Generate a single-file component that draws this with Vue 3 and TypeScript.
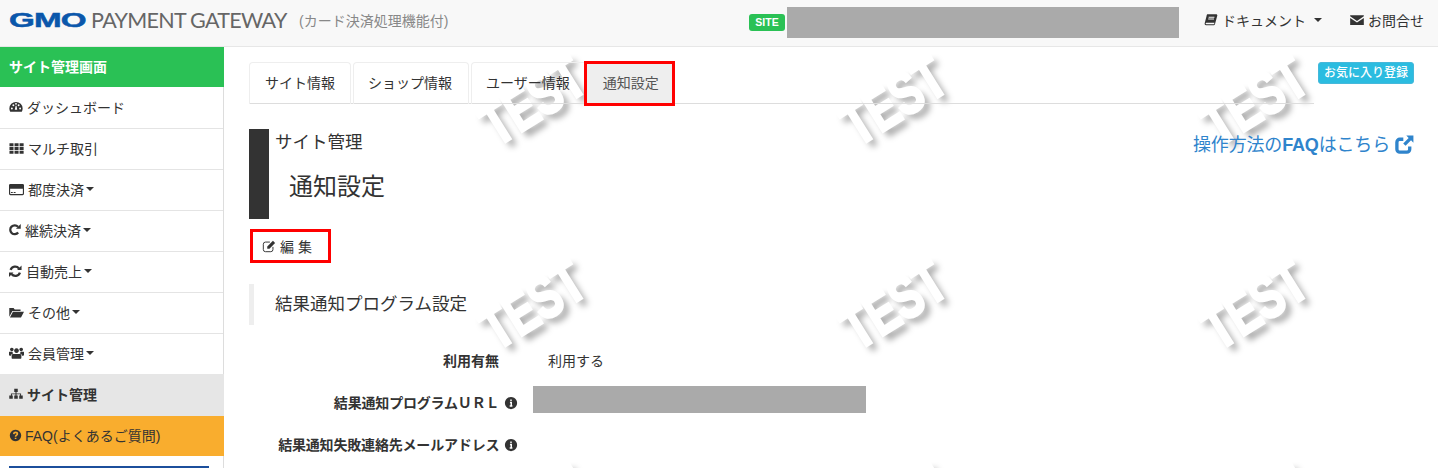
<script setup lang="ts">
interface Icon { fill?: string; stroke?: string; white?: string; vb?: string }
const icons: Record<string, Icon> = {
  dashboard: { fill: 'M8 2.2A7.6 7.6 0 0 0 .4 9.8c0 1.4.4 2.6 1 3.6h13.2c.6-1 1-2.2 1-3.6A7.6 7.6 0 0 0 8 2.2zM2.2 9.8a1.1 1.1 0 1 0 2.2 0a1.1 1.1 0 1 0-2.2 0zM3.9 6a1.1 1.1 0 1 0 2.2 0a1.1 1.1 0 1 0-2.2 0zM6.9 4.4a1.1 1.1 0 1 0 2.2 0a1.1 1.1 0 1 0-2.2 0zM9.9 6a1.1 1.1 0 1 0 2.2 0a1.1 1.1 0 1 0-2.2 0zM11.6 9.8a1.1 1.1 0 1 0 2.2 0a1.1 1.1 0 1 0-2.2 0zM6.6 11.2h2.8L8.6 6.6h-1z' },
  th: { fill: 'M.5 2.5h4.3v3H.5zM5.9 2.5h4.3v3H5.9zM11.3 2.5h4.3v3h-4.3zM.5 6.5h4.3v3H.5zM5.9 6.5h4.3v3H5.9zM11.3 6.5h4.3v3h-4.3zM.5 10.5h4.3v3H.5zM5.9 10.5h4.3v3H5.9zM11.3 10.5h4.3v3h-4.3z' },
  card: { fill: 'M1.5 2h13A1.5 1.5 0 0 1 16 3.5v9a1.5 1.5 0 0 1-1.5 1.5h-13A1.5 1.5 0 0 1 0 12.5v-9A1.5 1.5 0 0 1 1.5 2zM1.2 7.2v5.1c0 .3.2.5.5.5h12.6c.3 0 .5-.2.5-.5V7.2zM2 10.6h2v1H2zM5 10.6h2v1H5z' },
  repeat: { vb: '1.5 1.4 14 14', stroke: 'M12.2 11.4A5.2 5.2 0 1 1 12 4.6', fill: 'M9.6 7h5.6V1.4z' },
  refresh: { vb: '1 1 14.5 14.5', stroke: 'M2.8 6.4A5.4 5.4 0 0 1 12.2 5M13.2 9.6A5.4 5.4 0 0 1 3.8 11', fill: 'M10 6.6h5V1.6zM6 9.4H1v5z' },
  folder: { fill: 'M.3 12.5V3.2h4.6l1.2 1.5h6.2v1.6H3.6zM4.2 7.3H16L12.8 13.4H1z' },
  users: { fill: 'M8 2.4a2.5 2.5 0 1 0 .01 0zM3 1.8a1.9 1.9 0 1 0 .01 0zM13 1.8a1.9 1.9 0 1 0 .01 0zM4.5 8.4h7c1 0 1.7.7 1.7 1.8v2.2c0 .8-.6 1.3-1.3 1.3H4.100c-.7 0-1.300-.5-1.300-1.300v-2.200c0-1.100.7-1.800 1.700-1.800zM.3 6.200h3.300c.2.800.6 1.300 1 1.700-1.500.3-2.400 1.200-2.600 2.500H1c-.6 0-1-.4-1-1V7c0-.4.100-.8.300-.8zM15.700 6.200h-3.300c-.2.800-.6 1.300-1 1.700 1.500.3 2.400 1.200 2.600 2.500h1c.6 0 1-.4 1-1V7c0-.4-.1-.8-.3-.8z' },
  sitemap: { fill: 'M6 2h4v3.800H8.600v1.500h5.200v2.400H15.700V13.500h-4V9.700h1V8.400H8.600v1.300H10V13.500H6V9.700h1.400V8.400H3.300v1.300h1V13.500h-4V9.700h1.900V7.300h5.200V5.800H6z' },
  question: { fill: 'M8 1a7 7 0 1 0 .01 0z', white: 'M5.800 6.300C5.900 4.900 6.900 4.200 8.100 4.200c1.300 0 2.200.8 2.200 1.900 0 1.500-2.200 1.600-2.200 3.300M8.100 10.700v1.500' },
  info: { fill: 'M8 1a7 7 0 1 0 .01 0z', white: 'M6.800 7.400h1.500v4M6.500 11.400h3.100M8 4.100v1.500' },
  book: { fill: 'M4 1.500h10.500l.8 1-2.700 10c-.2.900-1 1.500-1.900 1.500H2.300C1.200 14 .4 13 .8 11.800L3 3c.1-.8.500-1.500 1-1.500zM5.300 4.300v1h6.600v-1zM4.800 6.400v1h6.600v-1zM2.700 11.200c-.6 0-.9.400-.8.900 0 .5.400.7.900.7h8.300c.3 0 .5-.2.600-.5l.2-1.100z' },
  mail: { fill: 'M.2 2.500h15.600v1.300L8 9 .2 3.800zM.2 5.600 8 10.800l7.800-5.200v8H.2z' },
  external: { stroke: 'M7 3.600H4A2.400 2.400 0 0 0 1.600 6v6A2.400 2.400 0 0 0 4 14.400h6a2.400 2.400 0 0 0 2.400-2.400V9.600', fill: 'M9.500.5h6v6l-2-2-4.600 4.600-2-2L11.500 2.500z' },
}
const menu = [
  { icon: 'dashboard', label: 'ダッシュボード', w: 14 },
  { icon: 'th', label: 'マルチ取引', w: 15 },
  { icon: 'card', label: '都度決済', caret: true, w: 15 },
  { icon: 'repeat', label: '継続決済', caret: true, w: 12 },
  { icon: 'refresh', label: '自動売上', caret: true, w: 13 },
  { icon: 'folder', label: 'その他', caret: true, w: 15 },
  { icon: 'users', label: '会員管理', caret: true, w: 15 },
]
const tabs = ['サイト情報', 'ショップ情報', 'ユーザー情報']
const marks = [
  [309, 101], [670, 101], [1031, 101],
  [309, 305], [670, 305], [1031, 305],
  [309, 509], [670, 509], [1031, 509],
].map(([x, y]) => ({ left: `${x}px`, top: `${y - 47}px` }))
</script>

<template>
  <div class="page">
    <header class="topbar">
      <div class="logo">
        <span class="gmo">GMO</span>
        <span class="pg">PAYMENT GATEWAY</span>
      </div>
      <span class="sub">(カード決済処理機能付)</span>
      <span class="site">SITE</span>
      <span class="redact head-redact"></span>
      <a class="nav-link doc">
        <svg class="ic" viewBox="0 0 16 16"><path :d="icons.book.fill" fill="#333" fill-rule="evenodd" /></svg>
        ドキュメント<i class="caret caret-doc"></i>
      </a>
      <a class="nav-link contact">
        <svg class="ic" viewBox="0 0 16 16"><path :d="icons.mail.fill" fill="#333" /></svg>
        お問合せ
      </a>
    </header>
    <div class="body">
      <aside class="side">
        <div class="side-title">サイト管理画面</div>
        <a v-for="m in menu" :key="m.label" class="side-item">
          <svg class="ic" :style="{ width: m.w + 'px', height: m.w + 'px' }" :viewBox="icons[m.icon].vb || '0 0 16 16'">
            <path v-if="icons[m.icon].stroke" :d="icons[m.icon].stroke" fill="none" stroke="#333" stroke-width="2.6" />
            <path :d="icons[m.icon].fill" fill="#333" fill-rule="evenodd" />
          </svg>
          <span>{{ m.label }}</span><i v-if="m.caret" class="caret"></i>
        </a>
        <a class="side-item current">
          <svg class="ic" viewBox="0 0 16 16"><path :d="icons.sitemap.fill" fill="#333" /></svg>
          <span>サイト管理</span>
        </a>
        <a class="side-item faq">
          <svg class="ic small" viewBox="0 0 16 16">
            <path :d="icons.question.fill" fill="#333" />
            <path :d="icons.question.white" fill="none" stroke="#f9ad2e" stroke-width="2" />
          </svg>
          <span>FAQ(よくあるご質問)</span>
        </a>
        <div class="banner-edge"></div>
      </aside>
      <main class="main">
        <div class="marks">
          <span v-for="(p, i) in marks" :key="i" class="mark" :style="p">TEST</span>
        </div>
        <div class="content">
          <div class="tabs-row">
            <nav class="tabs">
              <a v-for="t in tabs" :key="t" class="tab">{{ t }}</a>
              <a class="tab active">通知設定</a>
            </nav>
            <a class="fav">お気に入り登録</a>
          </div>
          <div class="title-row">
            <div class="title">
              <div class="crumb">サイト管理</div>
              <h1>通知設定</h1>
            </div>
            <a class="howto"><span>操作方法の<b>FAQ</b>はこちら</span>
              <svg class="ext" viewBox="0 0 16 16">
                <path :d="icons.external.stroke" fill="none" stroke="#2f84cc" stroke-width="2.800" />
                <path :d="icons.external.fill" fill="#2f84cc" />
              </svg>
            </a>
          </div>
          <a class="edit">
            <svg class="edit-ic" viewBox="0 0 16 16">
              <path d="M12.500 9v3A2.500 2.500 0 0 1 10 14.500H4A2.500 2.500 0 0 1 1.500 12V6A2.500 2.500 0 0 1 4 3.500h5" fill="none" stroke="#333" stroke-width="1.100" />
              <path d="M6 8.500 12.500 2l2.500 2.500L8.500 11H6z" fill="#333" />
            </svg>
            <span>編 集</span>
          </a>
          <h2 class="section">結果通知プログラム設定</h2>
          <dl class="form">
            <div class="row">
              <dt>利用有無</dt>
              <dd class="value">利用する</dd>
            </div>
            <div class="row">
              <dt class="with-info">結果通知プログラムＵＲＬ
                <svg class="info" viewBox="0 0 16 16">
                  <path :d="icons.info.fill" fill="#333" />
                  <path :d="icons.info.white" fill="none" stroke="#fff" stroke-width="1.700" />
                </svg>
              </dt>
              <dd class="redact url-redact"></dd>
            </div>
            <div class="row">
              <dt class="with-info">結果通知失敗連絡先メールアドレス
                <svg class="info" viewBox="0 0 16 16">
                  <path :d="icons.info.fill" fill="#333" />
                  <path :d="icons.info.white" fill="none" stroke="#fff" stroke-width="1.700" />
                </svg>
              </dt>
              <dd></dd>
            </div>
          </dl>
        </div>
      </main>
    </div>
  </div>
</template>

<style>
html, body { margin: 0; background: #fff; }
</style>

<style scoped>
.page {
  width: 1438px;
  height: 468px;
  overflow: hidden;
  font-family: "Liberation Sans", "Noto Sans CJK JP", sans-serif;
  font-size: 14px;
  color: #333;
}
.topbar {
  height: 46px;
  border-bottom: 1px solid #e7e7e7;
  background: #f8f8f8;
  display: flex;
  align-items: center;
  padding-left: 9px;
}
.logo { display: flex; flex: none; align-items: center; width: 278px; margin-top: -6px; }
.gmo {
  flex: none;
  display: inline-block;
  width: 82px;
  font-size: 21px;
  font-weight: 700;
  color: #0b57ab;
  -webkit-text-stroke: .5px #0b57ab;
  transform: scaleX(1.58);
  transform-origin: left center;
  letter-spacing: -.5px;
}
.pg {
  flex: none;
  font-family: "Lato", sans-serif;
  font-size: 21.500px;
  color: #666;
  white-space: nowrap;
  letter-spacing: -.7px;
}
.sub { flex: none; margin-left: 12px; margin-top: -6px; color: #888; width: 450px; }
.site {
  flex: none;
  width: 36px;
  height: 17px;
  line-height: 17px;
  margin-top: -1px;
  border-radius: 3px;
  background: #2ac155;
  color: #fff;
  font-size: 10.500px;
  font-weight: 700;
  text-align: center;
}
.redact { background: #aaa; display: block; }
.head-redact { flex: none; width: 392px; height: 31px; margin-left: 2px; margin-top: -1px; }
.nav-link { display: flex; align-items: center; color: #333; white-space: nowrap; margin-top: -6px; }
.doc { margin-left: 25px; }
.contact { margin-left: 28px; }
.ic { width: 14px; height: 14px; margin-right: 4px; flex: none; }
.caret {
  display: inline-block;
  width: 0;
  height: 0;
  margin-left: 2px;
  border-top: 4px solid #333;
  border-left: 4px solid transparent;
  border-right: 4px solid transparent;
}
.caret-doc { margin-left: 8px; }
.body { display: flex; height: 421px; }
.side {
  width: 224px;
  flex: none;
  box-sizing: border-box;
  position: relative;
  z-index: 2;
  background: #fff;
  border-right: 1px solid #ddd;
}
.side-title {
  height: 40px;
  margin: 0 -1px 1px 0;
  line-height: 40px;
  padding-left: 9px;
  background: #2ac155;
  color: #fff;
  font-weight: 700;
}
.side-item {
  height: 38px;
  padding-bottom: 2px;
  display: flex;
  align-items: center;
  padding-left: 9px;
  border-bottom: 1px solid #e4e4e4;
  color: #333;
  white-space: nowrap;
}
.current, .faq { border-bottom: 0; margin-right: -1px; }
.current { height: 40px; margin-top: -1px; background: #e6e6e6; font-weight: 700; position: relative; }
.faq { background: #f9ad2e; height: 38px; }
.small { width: 13px; height: 13px; margin-right: 3px; }
.banner-edge {
  height: 2px;
  margin: 10px 14px 0 9px;
  background: #1c4f9c;
}
.main { flex: 1; position: relative; overflow: hidden; }
.marks { position: absolute; inset: 0; z-index: 0; }
.mark {
  position: absolute;
  width: 180px;
  margin-left: -90px;
  margin-top: -40px;
  line-height: 80px;
  text-align: center;
  font-size: 60px;
  font-weight: 700;
  color: #fff;
  -webkit-text-stroke: 3px #fff;
  text-shadow: 3px 8px 7px rgba(0, 0, 0, .35);
  transform: rotate(-32deg) scaleX(.72);
}
.content {
  position: relative;
  z-index: 1;
  padding: 15px 24px 0 25px;
}
.tabs-row {
  display: flex;
  align-items: flex-start;
  position: relative;
}
.tabs {
  flex: 1;
  height: 41px;
  display: flex;
  border-bottom: 1px solid #ddd;
  margin-right: 100px;
}
.tab {
  height: 41px;
  line-height: 41px;
  padding: 0 16px 0 14px;
  margin-right: 2px;
  border: 1px solid #eee;
  border-bottom: 0;
  border-radius: 4px 4px 0 0;
  white-space: nowrap;
}
.tab:first-child { padding: 0 15px; }
.tab.active {
  position: relative;
  height: 39px;
  line-height: 39px;
  margin: -1px 0 0 -5px;
  padding: 0 13px 0 16px;
  width: 56px;
  background: #eee;
  border: 3px solid #f00;
  border-radius: 0;
  color: #555;
  z-index: 1;
}
.fav {
  position: absolute;
  right: 0;
  top: 0;
  width: 96px;
  height: 22px;
  line-height: 21px;
  box-sizing: border-box;
  border: 1px solid #46b8da;
  border-radius: 3px;
  background: #2bbce0;
  color: #fff;
  font-size: 12px;
  font-weight: 500;
  text-align: center;
  white-space: nowrap;
}
.title-row {
  display: flex;
  justify-content: space-between;
  align-items: flex-start;
  margin-top: 25px;
}
.title {
  width: 500px;
  height: 90px;
  box-sizing: border-box;
  border-left: 20px solid #333;
  padding-left: 6px;
}
.crumb { font-size: 17.500px; line-height: 27px; }
.title h1 {
  margin: 14px 0 0 14px;
  font-size: 24px;
  line-height: 34px;
  font-weight: 400;
}
.howto {
  display: flex;
  align-items: center;
  margin-top: 4px;
  font-size: 18px;
  line-height: 24px;
  color: #2f84cc;
  letter-spacing: -.17px;
  white-space: nowrap;
}
.ext { width: 19px; height: 19px; margin-left: 5px; margin-top: -2px; }
.edit {
  display: flex;
  align-items: center;
  width: 81px;
  height: 34px;
  box-sizing: border-box;
  margin: 10px 0 0 1px;
  padding-left: 9px;
  border: 3px solid #f00;
}
.edit-ic { width: 14px; height: 14px; margin-right: 4px; }
.section {
  margin: 21px 0 0;
  height: 41px;
  line-height: 41px;
  box-sizing: border-box;
  border-left: 5px solid #eee;
  padding-left: 21px;
  font-size: 17.500px;
  font-weight: 400;
}
.form { margin: 14px 0 0; }
.row {
  height: 42px;
  display: flex;
  align-items: center;
}
.row dt {
  width: 250px;
  font-weight: 700;
  font-size: 14px;
  text-align: right;
  white-space: nowrap;
  box-sizing: border-box;
}
.row dt.with-info { width: 269px; letter-spacing: -.18px; }
.info { width: 14px; height: 14px; vertical-align: -2px; margin-left: 1px; }
.row dd { margin: 0; }
.value { margin-left: 49px !important; font-size: 14px; }
.url-redact { margin: -6px 0 0 15px !important; width: 333px; height: 27px; }
</style>
